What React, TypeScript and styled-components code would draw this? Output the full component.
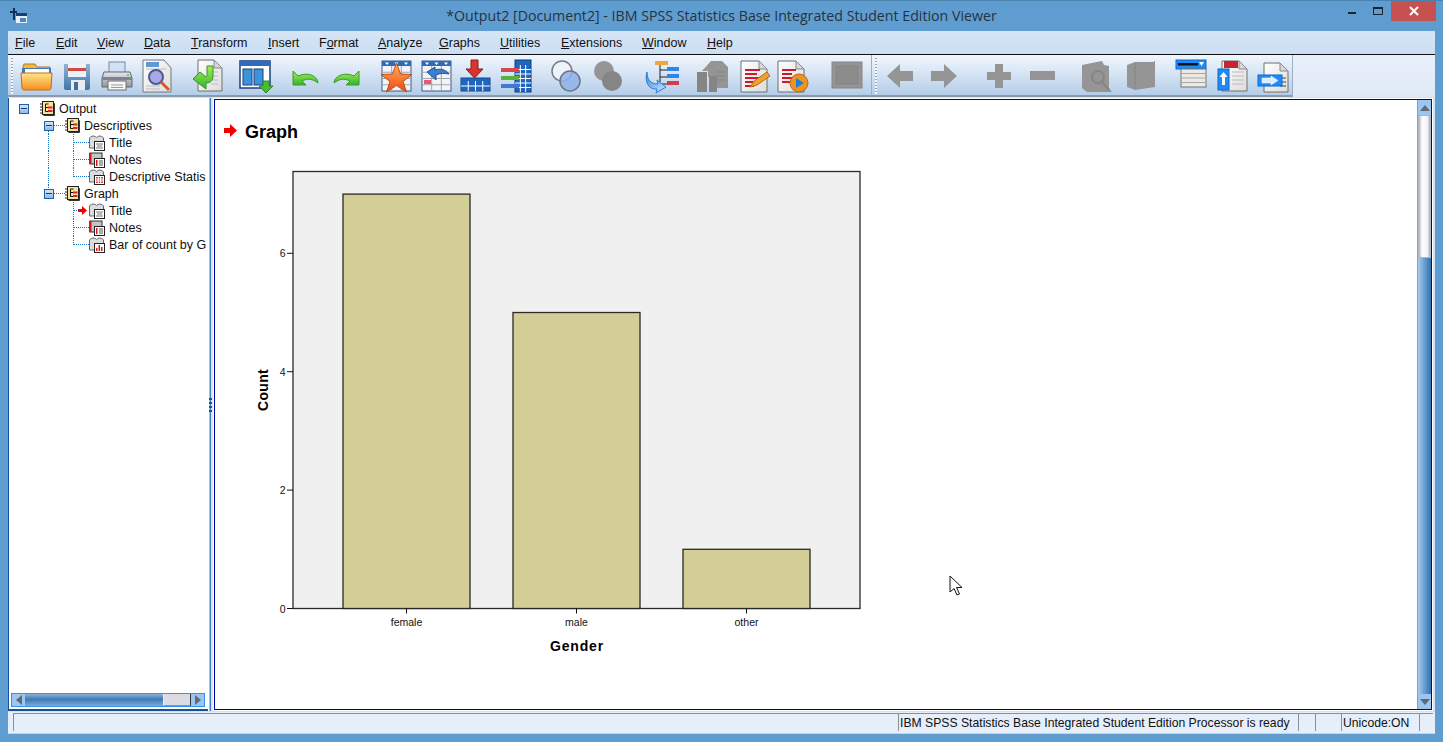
import React from "react";
import styled, { createGlobalStyle } from "styled-components";

const GlobalStyle = createGlobalStyle`
  html, body { margin: 0; padding: 0; background: #5f9dd1; }
  body { font-family: "Liberation Sans", Arial, sans-serif; }
`;

const Window = styled.div`
  width: 1443px;
  height: 742px;
  display: flex;
  flex-direction: column;
  background: #5f9dd1;
  border-top: 1px solid #4a83ae;
  box-sizing: border-box;
  position: relative;
  overflow: hidden;
`;

const TitleBar = styled.div`
  height: 30px;
  flex: none;
  display: grid;
  grid-template-columns: 1fr auto 1fr;
  align-items: start;
`;

const AppIcon = styled.svg`
  margin: 7px 0 0 10px;
`;

const TitleText = styled.div`
  font-family: "Open Sans", "Noto Sans", sans-serif;
  font-size: 14.2px;
  line-height: 30px;
  color: #26323e;
`;

const Controls = styled.div`
  display: flex;
  justify-content: flex-end;
  padding-right: 7px;
`;

const CtrlButton = styled.div<{ $close?: boolean }>`
  width: ${(p) => (p.$close ? 45 : 26)}px;
  height: 20px;
  background: ${(p) => (p.$close ? "#c75050" : "transparent")};
  display: flex;
  align-items: center;
  justify-content: center;
`;

const Body = styled.div`
  flex: 1;
  margin: 0 8px;
  display: flex;
  flex-direction: column;
  min-height: 0;
  background: #dce9f7;
`;

const MenuBar = styled.div`
  height: 23px;
  flex: none;
  display: flex;
  align-items: center;
  padding-left: 7px;
  background: linear-gradient(#d6e5f6, #cbdef3);
  border-bottom: 1px solid #111;
  font-size: 12.5px;
  color: #111;
  u { text-underline-offset: 1px; }
`;

const MenuItem = styled.span<{ $w: number }>`
  width: ${(p) => p.$w}px;
  flex: none;
  white-space: nowrap;
`;

const ToolRow = styled.div`
  height: 42px;
  flex: none;
  display: flex;
  background: linear-gradient(#e8f0fa, #dfe9f6);
`;

const ToolSection = styled.div<{ $width: number }>`
  width: ${(p) => p.$width}px;
  flex: none;
  display: flex;
  align-items: center;
  box-sizing: border-box;
  padding-top: 2px;
  background: linear-gradient(#f0f6fd, #e0ebf8 30%, #b4cde8);
  border-bottom: 2px solid #8c9bab;
  border-right: 1px solid #9fb0c2;
`;

const Grip = styled.span`
  width: 2px;
  height: 36px;
  margin-left: 3px;
  flex: none;
  background: repeating-linear-gradient(#8fa3b8 0 1px, #f5f9fd 1px 3px);
`;

const Tool = styled.span<{ $gap: number }>`
  width: 36px;
  height: 36px;
  flex: none;
  margin-left: ${(p) => p.$gap}px;
  svg { display: block; }
`;

const Main = styled.div`
  flex: 1;
  min-height: 0;
  display: flex;
  padding: 1px 2px 1px 0;
  background: #d3e3f5;
`;

const TreePane = styled.div`
  width: 200px;
  flex: none;
  box-sizing: border-box;
  display: flex;
  flex-direction: column;
  background: #fff;
  border-left: 1px solid #16519c;
  border-bottom: 2px solid #16519c;
`;

const Tree = styled.div`
  flex: 1;
  padding-top: 2px;
  overflow: hidden;
`;

const TreeRow = styled.div<{ $level: number }>`
  position: relative;
  height: 17px;
  width: 197px;
  overflow: hidden;
  display: flex;
  align-items: center;
  white-space: nowrap;
  font-size: 12.5px;
  color: #111;
  padding-left: ${(p) => [10, 35, 80][p.$level]}px;
  box-sizing: border-box;
  svg { flex: none; }
`;

const Expander = styled.span`
  width: 10px;
  height: 10px;
  box-sizing: border-box;
  flex: none;
  margin-right: 11px;
  border: 1px solid #1d5fa8;
  background: linear-gradient(#d4e5f8, #8fb9e6);
  display: flex;
  align-items: center;
  justify-content: center;
  position: relative;
  z-index: 1;
  &::after {
    content: "";
    width: 6px;
    height: 1px;
    background: #173f73;
  }
`;

const NodeLabel = styled.span`
  margin-left: 4px;
`;

const VLine = styled.i<{ $x: number; $part: "full" | "top" | "bottom" }>`
  position: absolute;
  left: ${(p) => p.$x}px;
  top: ${(p) => (p.$part === "bottom" ? "9px" : "0")};
  bottom: ${(p) => (p.$part === "top" ? "8px" : "0")};
  border-left: 1px dotted #1672c8;
`;

const HLine = styled.i<{ $x: number; $w: number }>`
  position: absolute;
  left: ${(p) => p.$x}px;
  width: ${(p) => p.$w}px;
  top: 8px;
  border-top: 1px dotted #1672c8;
`;

const Marker = styled.svg`
  position: absolute;
  left: 69px;
  top: 4px;
`;

const HScroll = styled.div`
  height: 14px;
  flex: none;
  margin: 0 3px 2px 2px;
  display: flex;
  border: 1px solid #2f93f3;
  box-sizing: border-box;
`;

const ScrollButton = styled.span<{ $w?: number; $h?: number }>`
  width: ${(p) => (p.$w ? `${p.$w}px` : "auto")};
  height: ${(p) => (p.$h ? `${p.$h}px` : "auto")};
  flex: none;
  display: flex;
  align-items: center;
  justify-content: center;
  background: #9cc5f2;
`;

const HTrack = styled.span`
  flex: 1;
  background: linear-gradient(#8eb2d8, #3b7ab8 45%, #82aad3);
`;

const HThumb = styled.span`
  width: 26px;
  flex: none;
  background: #dcdbe4;
  border-right: 1px solid #26374e;
  border-bottom: 1px solid #8a93a6;
  border-left: 1px solid #eee;
`;

const Splitter = styled.div`
  width: 5px;
  flex: none;
  display: flex;
  align-items: center;
  justify-content: center;
  background: linear-gradient(90deg, #fff 0 1px, #9cc3ec 1px 2px, #3c7fc4 2px 3px, #d8e6f6 3px);
`;

const SplitDots = styled.span`
  width: 3px;
  height: 14px;
  background: repeating-linear-gradient(#1c4f90 0 2px, transparent 2px 4px);
`;

const ViewerPane = styled.div`
  flex: 1;
  min-width: 0;
  display: flex;
  border: 2px solid #0000a4;
  outline: 1px solid #fff;
  outline-offset: -1px;
  background: #fff;
`;

const Content = styled.div`
  flex: 1;
  min-width: 0;
  overflow: hidden;
  padding: 20px 0 0 9px;
`;

const Heading = styled.div`
  display: flex;
  align-items: center;
  gap: 8px;
  height: 22px;
  font-size: 18px;
  font-weight: bold;
  color: #000;
  span { position: relative; top: 1px; }
`;

const ChartSvg = styled.svg`
  display: block;
  margin: 18px 0 0 21px;
  font-family: "Liberation Sans", Arial, sans-serif;
`;

const VScroll = styled.div`
  width: 14px;
  flex: none;
  display: flex;
  flex-direction: column;
  box-sizing: border-box;
  border-left: 1px solid #5fa9f5;
`;

const VThumb = styled.span`
  height: 143px;
  flex: none;
  box-sizing: border-box;
  background: linear-gradient(90deg, #b8b8c2, #fff 30%, #f4f4f8 75%, #aeb0bc);
  border: 1px solid #a9b6c6;
`;

const VTrack = styled.span`
  flex: 1;
  background: linear-gradient(90deg, #a9cbee, #6a9dd0 50%, #2e70b2);
`;

const StatusBar = styled.div`
  height: 22px;
  flex: none;
  display: flex;
  box-sizing: border-box;
  padding: 1px 2px 2px 5px;
  background: #e6eff9;
  border-bottom: 1px solid #c8d3df;
  font-size: 12.2px;
  color: #111;
`;

const StatusCell = styled.div<{ $w?: number }>`
  width: ${(p) => (p.$w ? `${p.$w}px` : "auto")};
  flex: ${(p) => (p.$w ? "none" : "1")};
  box-sizing: border-box;
  padding-left: 1px;
  border-left: 1px solid #8d8d92;
  border-top: 1px solid #8d8d92;
  line-height: 18px;
  white-space: nowrap;
  overflow: hidden;
`;

const BottomFrame = styled.div`
  height: 8px;
  flex: none;
`;

const Pointer = styled.svg`
  position: absolute;
  left: 949px;
  top: 574px;
`;

const Defs = styled.svg`
  position: absolute;
  width: 0;
  height: 0;
`;

const GREY = "#959595";
const GREY_D = "#858585";

function PageShape({ x, y, w, h, fill = "url(#page)" }: { x: number; y: number; w: number; h: number; fill?: string }) {
  return (
    <>
      <path d={`M${x} ${y}h${w - 8}l8 8v${h - 8}h-${w}z`} fill={fill} stroke="#6f6f6f" />
      <path d={`M${x + w - 8} ${y}v8h8z`} fill="#d8d8d8" stroke="#8a8a8a" />
    </>
  );
}

function GridLines({ x, y, w, h, cols, rows, color }: { x: number; y: number; w: number; h: number; cols: number; rows: number; color: string }) {
  const lines: React.ReactNode[] = [];
  for (let i = 1; i < cols; i++) lines.push(<path key={`c${i}`} d={`M${x + (i * w) / cols} ${y}v${h}`} stroke={color} />);
  for (let i = 1; i < rows; i++) lines.push(<path key={`r${i}`} d={`M${x} ${y + (i * h) / rows}h${w}`} stroke={color} />);
  return <>{lines}</>;
}

const folder = (
  <>
    <path d="M4 9l1-3h11l2 3h13v12H4z" fill="#f5b83a" stroke="#b9791a" />
    <rect x="3" y="10" width="29" height="6" fill="#3f78bf" />
    <rect x="6" y="11" width="24" height="5" fill="#fff" />
    <path d="M2 15h31l-1 15c0 1-1 2-2 2H5c-1 0-2-1-2-2z" fill="url(#orange)" stroke="#c56a10" />
  </>
);

const save = (
  <>
    <path d="M5 6h26v24a2 2 0 0 1-2 2H7a2 2 0 0 1-2-2z" fill="url(#disk)" />
    <rect x="9" y="6" width="18" height="13" fill="#eef1f5" />
    <rect x="9" y="10" width="18" height="3" fill="#d34747" />
    <rect x="12" y="22" width="14" height="10" fill="#e9edf2" />
    <rect x="15" y="24" width="4" height="8" fill="#3f6f9f" />
  </>
);

const printer = (
  <>
    <rect x="10" y="4" width="16" height="12" fill="#cfe2f7" stroke="#7d8a98" />
    <path d="M5 14h26l2 6v9H3v-9z" fill="url(#metal)" stroke="#5f6770" />
    <rect x="3" y="19" width="30" height="3" fill="#7c858f" />
    <rect x="9" y="23" width="18" height="9" fill="#f7f7f7" stroke="#6f6f6f" />
    <path d="M12 27h12M12 29.5h12" stroke="#999" />
    <circle cx="29" cy="17" r="1" fill="#4fc14f" />
  </>
);

const preview = (
  <>
    <path d="M4 2h21l7 8v24H4z" fill="url(#page)" stroke="#777" />
    <rect x="7" y="4" width="13" height="5" fill="#5d99d6" />
    <path d="M7 11h20M7 28h14M7 31h14" stroke="#bbb" />
    <circle cx="17" cy="19" r="7" fill="#a9a8e8" stroke="#4e5a8e" strokeWidth="2" />
    <path d="M22 24l8 8" stroke="#d8562c" strokeWidth="3" />
  </>
);

const exportDoc = (
  <>
    <PageShape x={9} y={2} w={24} h={31} />
    <path d="M20 14h9M22 18h7M22 22h7M22 26h7" stroke="#bbb" />
    <path d="M18 8h6v10c0 5-3 7-7 7l0 6-13-10 7-7 6 5c1-1 1-2 1-3z" fill="url(#green)" stroke="#3a8f2a" />
  </>
);

const designate = (
  <>
    <rect x="2" y="3" width="30" height="27" fill="#fff" stroke="#1c3f7d" strokeWidth="1.5" />
    <rect x="2" y="3" width="30" height="5" fill="#2c6cc0" />
    <rect x="5" y="11" width="9" height="16" fill="#3b93dc" stroke="#1c3f7d" />
    <rect x="16" y="11" width="9" height="16" fill="#3b93dc" stroke="#1c3f7d" />
    <path d="M25 23h6v5h4l-7 7-7-7h4z" fill="#4dbb2f" stroke="#2b8a20" />
  </>
);

const undo = <path d="M5 13v14h13l-4-4c6-3 11-2 16 2 0-6-9-12-20-7l-5-5z" fill="url(#green)" stroke="#3d9a2a" />;

const redo = <path d="M31 13v14H18l4-4c-6-3-11-2-16 2 0-6 9-12 20-7l5-5z" fill="url(#green)" stroke="#3d9a2a" />;

function TableBase() {
  return (
    <>
      <rect x="3" y="3" width="29" height="30" fill="#f4f4f6" stroke="#3a5b8f" />
      <rect x="3" y="3" width="29" height="5" fill="#2f6cb8" />
      <path d="M6 4.500h4l-2 2.500zM15.500 4.500h4l-2 2.500zM25 4.500h4l-2 2.500z" fill="#fff" />
      <GridLines x={3} y={8} w={29} h={25} cols={3} rows={4} color="#9aa6b6" />
    </>
  );
}

const starTable = (
  <>
    <TableBase />
    <path d="M17.5 5l4 11 11.5 .5-9 7 3.5 10.5-10-6.5-10 6.5 3.5-10.5-9-7 11.5-.5z" fill="url(#star)" stroke="#c94a10" />
  </>
);

const tableBack = (
  <>
    <TableBase />
    <rect x="5" y="22" width="7" height="4" fill="#e85a70" />
    <path d="M8 14l8-5v3c6-2 11 0 14 4-4-1-9-1-13 1v5z" fill="#3a7fd0" stroke="#1f4f90" />
  </>
);

const insertCases = (
  <>
    <path d="M11 2h7v9h5l-8.500 9-8.500-9h5z" transform="translate(1)" fill="#d6342c" stroke="#8c1c18" />
    <rect x="2" y="20" width="29" height="13" fill="#1f66c0" stroke="#164a8c" />
    <GridLines x={2} y={23} w={29} h={10} cols={4} rows={2} color="#fff" />
  </>
);

const dataBlue = (
  <>
    <rect x="17" y="2" width="16" height="32" fill="#1f66c0" stroke="#133e7c" />
    <GridLines x={17} y={7} w={16} h={27} cols={3} rows={6} color="#fff" />
    <rect x="3" y="10" width="18" height="4" fill="#d9474f" />
    <rect x="3" y="18" width="18" height="4" fill="#58b23c" />
    <rect x="3" y="26" width="18" height="4" fill="#3f7bd0" />
  </>
);

const venn = (
  <>
    <circle cx="14" cy="13" r="10" fill="#eef2fa" stroke="#7c7c84" strokeWidth="1.500" />
    <circle cx="22" cy="23" r="10" fill="#8fb2ea" fillOpacity=".85" stroke="#6c7484" strokeWidth="1.500" />
  </>
);

const vennGrey = (
  <>
    <circle cx="14" cy="13" r="10" fill={GREY} />
    <circle cx="22" cy="23" r="10" fill={GREY_D} />
  </>
);

const outlineTree = (
  <>
    <rect x="12" y="3" width="13" height="4" fill="#f1a63a" />
    <path d="M17 7v20M17 12h8M17 19h8M17 26h8" stroke="#222" />
    <rect x="24" y="9" width="12" height="4" fill="#2f86e8" />
    <rect x="24" y="16" width="12" height="4" fill="#2f86e8" />
    <rect x="24" y="23" width="12" height="4" fill="#d9374a" />
    <path d="M4 14c0 8 4 12 11 12l-1-4 9 7-10 6 1-4C6 32 1 24 4 14z" fill="url(#blueArrow)" stroke="#2f7ed0" />
  </>
);

const docGrey = (
  <>
    <path d="M17 3h11l6 6v21H19V19h-5v-6H8l9-10z" fill={GREY} />
    <path d="M22 14h9M22 18h9M22 22h9" stroke={GREY_D} />
    <path d="M3 14h10v20H3zM15 18h8v16h-8z" fill={GREY_D} />
  </>
);

const docPencil = (
  <>
    <PageShape x={4} y={3} w={26} h={31} />
    <path d="M8 12h15M8 16h12M8 20h15M8 24h10M8 28h9" stroke="#d0182c" strokeWidth="2" />
    <path d="M13 29l4-6 13-9 3 4-13 9z" fill="#f0a030" stroke="#b86a10" />
  </>
);

const docPlay = (
  <>
    <PageShape x={1} y={3} w={26} h={31} />
    <path d="M5 12h14M5 16h10M5 20h13M5 24h8" stroke="#d0182c" strokeWidth="2" />
    <circle cx="22" cy="25" r="9" fill="#f0931e" stroke="#b86a10" />
    <path d="M19 20l8 5-8 5z" fill="#1f7fd6" />
  </>
);

const frameGrey = (
  <>
    <rect x="3" y="4" width="30" height="26" fill={GREY} stroke={GREY_D} />
    <rect x="7" y="8" width="22" height="18" fill="#808080" fillOpacity=".45" stroke={GREY_D} />
  </>
);

const leftGrey = <path d="M5 18L18 6v7h13v10H18v7z" fill={GREY} />;
const rightGrey = <path d="M31 18L18 6v7H5v10h13v7z" fill={GREY} />;
const plusGrey = <path d="M14 6h8v8h8v8h-8v8h-8v-8H6v-8h8z" fill={GREY} />;
const minusGrey = <rect x="6" y="13" width="25" height="9" fill={GREY} />;

const magGrey = (
  <>
    <path d="M3 7l20-4 2 4 5 1v22l3 4H8l-5-4z" fill={GREY} />
    <circle cx="19" cy="19" r="6" fill="none" stroke={GREY_D} strokeWidth="2" />
    <path d="M23 24l7 8" stroke={GREY_D} strokeWidth="2" />
  </>
);

const bookGrey = (
  <>
    <path d="M4 7l8-3h18l2-1v26l-20 3-8-3z" fill={GREY} />
    <path d="M12 5v26" stroke={GREY_D} />
  </>
);

const styleTable = (
  <>
    <rect x="2" y="2" width="30" height="9" fill="#1e8cf8" stroke="#1068c8" />
    <rect x="4" y="5" width="20" height="2.500" fill="#111" />
    <path d="M25 4h5l-2.500 4z" fill="#fff" />
    <rect x="7" y="11" width="25" height="18" fill="#eceae2" stroke="#777" />
    <path d="M7 15.500h25M7 20h25M7 24.500h25" stroke="#a9a9a9" />
  </>
);

const promote = (
  <>
    <PageShape x={5} y={3} w={25} h={30} />
    <rect x="7" y="3" width="14" height="7" fill="#c8242c" />
    <path d="M15 14h12M15 18h12M15 22h12M15 26h12" stroke="#bbb" />
    <rect x="1" y="11" width="11" height="21" fill="#1e8cf8" stroke="#1068c8" />
    <path d="M6.500 14l4 5h-2.500v8h-3v-8h-2.500z" fill="#fff" />
  </>
);

const demote = (
  <>
    <PageShape x={8} y={5} w={24} h={29} />
    <path d="M24 20h6M24 24h6M24 28h6" stroke="#444" />
    <rect x="2" y="17" width="24" height="11" fill="#1e8cf8" stroke="#1068c8" />
    <path d="M6 20h9v-2l7 4.500-7 4.500v-2H6z" fill="#dcecff" stroke="#fff" strokeWidth=".5" />
  </>
);

const firstTools: [number, React.ReactNode][] = [
  [37, folder], [77, save], [117, printer], [157, preview], [207, exportDoc], [256, designate],
  [306, undo], [346, redo], [397, starTable], [437, tableBack], [477, insertCases], [516, dataBlue],
  [566, venn], [608, vennGrey], [661, outlineTree], [712, docGrey], [755, docPencil], [795, docPlay], [847, frameGrey],
];

const secondTools: [number, React.ReactNode][] = [
  [900, leftGrey], [944, rightGrey], [999, plusGrey], [1042, minusGrey], [1097, magGrey], [1141, bookGrey],
  [1192, styleTable], [1235, promote], [1274, demote],
];

function ToolIcons({ tools, from }: { tools: [number, React.ReactNode][]; from: number }) {
  let edge = from;
  return (
    <>
      {tools.map(([center, icon]) => {
        const gap = center - 18 - edge;
        edge = center + 18;
        return (
          <Tool key={center} $gap={gap}>
            <svg width="36" height="36" viewBox="0 0 36 36">{icon}</svg>
          </Tool>
        );
      })}
    </>
  );
}

function BookIcon() {
  return (
    <svg width="15" height="16" viewBox="0 0 15 16">
      <rect x="2.500" y=".5" width="11" height="13" fill="#f8e39b" stroke="#222" />
      <path d="M13.500 2.500h1v12h-11" fill="none" stroke="#333" />
      <path d="M0 3h3M0 6h3M0 9h3M0 12h3" stroke="#222" />
      <path d="M5.500 3v7.500M5.500 3h3M5.500 6.500h2.500M5.500 10.500h3" stroke="#111" />
      <rect x="8" y="5.500" width="4.500" height="2" fill="#e0202c" />
      <rect x="8" y="9" width="4.500" height="2" fill="#e0202c" />
    </svg>
  );
}

function OpenBook() {
  return <path d="M.5 3c2-2.500 5-2.500 7-.5 2-2 5-2 7 .5v10H.5z" fill="#dcdcdc" stroke="#666" />;
}

function LeafIcon({ kind }: { kind: string }) {
  return (
    <svg width="16" height="16" viewBox="0 0 16 16">
      {kind === "notes" ? (
        <>
          <rect x="1" y="1" width="12" height="11" fill="#c4c4c4" stroke="#333" />
          <rect x="0" y="1" width="2.500" height="11" fill="#d81818" />
          <rect x="5.500" y="6.500" width="10" height="9" fill="#fff" stroke="#222" />
          <rect x="7" y="8" width="1.500" height="6" fill="#d81818" />
          <path d="M10 9h4M10 11h4M10 13h4" stroke="#555" />
        </>
      ) : (
        <>
          <OpenBook />
          <rect x="5.500" y="6.500" width="10" height="9" fill="#fff" stroke="#222" />
          {kind === "title" && <path d="M7 9h7M8 11h5M7 13h7" stroke="#777" />}
          {kind === "table" && (
            <>
              <rect x="7" y="8" width="7" height="6" fill="#e0343c" />
              <GridLines x={7} y={8} w={7} h={6} cols={3} rows={3} color="#fff" />
            </>
          )}
          {kind === "bar" && <path d="M7 14v-3h1.500v3zM9.500 14V8H11v6zM12 14v-4h1.500v4z" fill="#d81818" />}
        </>
      )}
    </svg>
  );
}

type Node = {
  level: number;
  label: string;
  leaf?: string;
  trunk?: "full" | "top" | "bottom";
  branch?: "full" | "top";
  marked?: boolean;
};

const nodes: Node[] = [
  { level: 0, label: "Output" },
  { level: 1, label: "Descriptives", trunk: "bottom" },
  { level: 2, label: "Title", leaf: "title", trunk: "full", branch: "full" },
  { level: 2, label: "Notes", leaf: "notes", trunk: "full", branch: "full" },
  { level: 2, label: "Descriptive Statis", leaf: "table", trunk: "full", branch: "top" },
  { level: 1, label: "Graph", trunk: "top" },
  { level: 2, label: "Title", leaf: "title", branch: "full", marked: true },
  { level: 2, label: "Notes", leaf: "notes", branch: "full" },
  { level: 2, label: "Bar of count by G", leaf: "bar", branch: "top" },
];

function TreeNode({ node }: { node: Node }) {
  return (
    <TreeRow $level={node.level}>
      {node.trunk && <VLine $x={39} $part={node.trunk} />}
      {node.branch && <VLine $x={64} $part={node.branch} />}
      {node.level === 1 && <HLine $x={44} $w={12} />}
      {node.level === 2 && <HLine $x={64} $w={node.marked ? 6 : 16} />}
      {node.marked && (
        <Marker width="9" height="9" viewBox="0 0 9 9">
          <path d="M0 3h4V0l5 4.500L4 9V6H0z" fill="#f00000" />
        </Marker>
      )}
      {node.leaf ? null : <Expander />}
      {node.leaf ? <LeafIcon kind={node.leaf} /> : <BookIcon />}
      <NodeLabel>{node.label}</NodeLabel>
    </TreeRow>
  );
}

const plot = { left: 293, right: 860, top: 171.5, bottom: 608.5 };
const unit = 59.2;
const bars = [
  { label: "female", x: 343, count: 7 },
  { label: "male", x: 513, count: 5 },
  { label: "other", x: 683, count: 1 },
];

function BarChart() {
  return (
    <ChartSvg width="640" height="510" viewBox="245 160 640 510">
      <rect x={plot.left} y={plot.top} width={plot.right - plot.left} height={plot.bottom - plot.top} fill="#f0f0f0" stroke="#2a2a2a" strokeWidth="1.3" />
      {bars.map((b) => (
        <g key={b.label}>
          <rect x={b.x} y={plot.bottom - b.count * unit} width={127} height={b.count * unit} fill="#d3ce97" stroke="#2a2a22" strokeWidth="1.3" />
          <path d={`M${b.x + 63.5} ${plot.bottom}v5`} stroke="#111" />
          <text x={b.x + 63.5} y={626} fontSize="10.5" textAnchor="middle" fill="#111">{b.label}</text>
        </g>
      ))}
      {[0, 2, 4, 6].map((n) => (
        <g key={n}>
          <path d={`M287 ${plot.bottom - n * unit}h6`} stroke="#111" />
          <text x={285.5} y={plot.bottom - n * unit + 4} fontSize="10.5" textAnchor="end" fill="#111">{n}</text>
        </g>
      ))}
      <text transform="translate(268 390) rotate(-90)" fontSize="14" fontWeight="bold" textAnchor="middle" letterSpacing=".3">Count</text>
      <text x={577} y={651} fontSize="14" fontWeight="bold" textAnchor="middle" letterSpacing=".8">Gender</text>
    </ChartSvg>
  );
}

const tri = "#5f6a72";

const menus: [React.ReactNode, number][] = [
  [<><u>F</u>ile</>, 41],
  [<><u>E</u>dit</>, 41],
  [<><u>V</u>iew</>, 47],
  [<><u>D</u>ata</>, 47],
  [<><u>T</u>ransform</>, 77],
  [<><u>I</u>nsert</>, 51],
  [<>F<u>o</u>rmat</>, 59],
  [<><u>A</u>nalyze</>, 61],
  [<><u>G</u>raphs</>, 61],
  [<><u>U</u>tilities</>, 61],
  [<><u>E</u>xtensions</>, 81],
  [<><u>W</u>indow</>, 65],
  [<><u>H</u>elp</>, 40],
];

export default function App() {
  return (
    <>
      <GlobalStyle />
      <Window>
        <Defs aria-hidden="true">
          <defs>
            <linearGradient id="orange" x2="0" y2="1"><stop offset="0" stopColor="#ffe58a" /><stop offset="1" stopColor="#f58f1e" /></linearGradient>
            <linearGradient id="disk" x2="0" y2="1"><stop offset="0" stopColor="#8fb4d8" /><stop offset="1" stopColor="#3f74a8" /></linearGradient>
            <linearGradient id="metal" x2="0" y2="1"><stop offset="0" stopColor="#e8eaec" /><stop offset="1" stopColor="#8d949c" /></linearGradient>
            <linearGradient id="page" x2="1" y2="1"><stop offset="0" stopColor="#ffffff" /><stop offset="1" stopColor="#dcdcdc" /></linearGradient>
            <linearGradient id="green" x2="0" y2="1"><stop offset="0" stopColor="#a8ec5a" /><stop offset="1" stopColor="#2fb52c" /></linearGradient>
            <linearGradient id="star" x2="0" y2="1"><stop offset="0" stopColor="#ffb060" /><stop offset="1" stopColor="#f04a10" /></linearGradient>
            <linearGradient id="blueArrow" x2="1" y2="1"><stop offset="0" stopColor="#2f8ae8" /><stop offset="1" stopColor="#cfe6ff" /></linearGradient>
          </defs>
        </Defs>
        <TitleBar>
          <AppIcon width="17" height="16" viewBox="0 0 17 16">
            <path d="M0 4h7M4 0v12" stroke="#12305c" strokeWidth="2" />
            <rect x="6" y="5" width="11" height="10" fill="#e8f1fa" />
            <rect x="6" y="5" width="11" height="3" fill="#173f73" />
            <rect x="10" y="10" width="6" height="4" fill="#4a86c8" />
          </AppIcon>
          <TitleText>*Output2 [Document2] - IBM SPSS Statistics Base Integrated Student Edition Viewer</TitleText>
          <Controls>
            <CtrlButton>
              <svg width="10" height="10" viewBox="0 0 10 10"><rect x="1" y="6" width="8" height="2" fill="#1a2430" /></svg>
            </CtrlButton>
            <CtrlButton>
              <svg width="11" height="9" viewBox="0 0 11 9"><rect x=".5" y=".5" width="9" height="7" fill="none" stroke="#1a2430" /><rect x="0" y="0" width="10" height="2" fill="#1a2430" /></svg>
            </CtrlButton>
            <CtrlButton $close>
              <svg width="10" height="10" viewBox="0 0 10 10"><path d="M1 1l8 8M9 1L1 9" stroke="#fff" strokeWidth="2" /></svg>
            </CtrlButton>
          </Controls>
        </TitleBar>
        <Body>
          <MenuBar>
            {menus.map(([label, w], i) => (
              <MenuItem key={i} $w={w}>{label}</MenuItem>
            ))}
          </MenuBar>
          <ToolRow>
            <ToolSection $width={864}>
              <Grip />
              <ToolIcons tools={firstTools} from={13} />
            </ToolSection>
            <ToolSection $width={421}>
              <Grip />
              <ToolIcons tools={secondTools} from={877} />
            </ToolSection>
          </ToolRow>
          <Main>
            <TreePane>
              <Tree>
                {nodes.map((n, i) => (
                  <TreeNode key={i} node={n} />
                ))}
              </Tree>
              <HScroll>
                <ScrollButton $w={13}>
                  <svg width="6" height="10" viewBox="0 0 6 10"><path d="M6 0v10L0 5z" fill={tri} /></svg>
                </ScrollButton>
                <HTrack />
                <HThumb />
                <ScrollButton $w={13}>
                  <svg width="6" height="10" viewBox="0 0 6 10"><path d="M0 0v10l6-5z" fill={tri} /></svg>
                </ScrollButton>
              </HScroll>
            </TreePane>
            <Splitter>
              <SplitDots />
            </Splitter>
            <ViewerPane>
              <Content>
                <Heading>
                  <svg width="13" height="14" viewBox="0 0 13 14"><path d="M0 4h6V0l7 6.500L6 13V9H0z" fill="#f00000" /></svg>
                  <span>Graph</span>
                </Heading>
                <BarChart />
              </Content>
              <VScroll>
                <ScrollButton $h={15}>
                  <svg width="10" height="6" viewBox="0 0 10 6"><path d="M0 6h10L5 0z" fill={tri} /></svg>
                </ScrollButton>
                <VThumb />
                <VTrack />
                <ScrollButton $h={15}>
                  <svg width="10" height="6" viewBox="0 0 10 6"><path d="M0 0h10L5 6z" fill={tri} /></svg>
                </ScrollButton>
              </VScroll>
            </ViewerPane>
          </Main>
          <StatusBar>
            <StatusCell />
            <StatusCell $w={400}>IBM SPSS Statistics Base Integrated Student Edition Processor is ready</StatusCell>
            <StatusCell $w={17} />
            <StatusCell $w={26} />
            <StatusCell $w={78}>Unicode:ON</StatusCell>
            <StatusCell $w={14} />
          </StatusBar>
        </Body>
        <BottomFrame />
        <Pointer width="14" height="22" viewBox="0 0 14 22">
          <path d="M1 1v16l4-3.500 3 6.500 2.500-1-3-6.500h5.500z" fill="#fff" stroke="#111" />
        </Pointer>
      </Window>
    </>
  );
}
